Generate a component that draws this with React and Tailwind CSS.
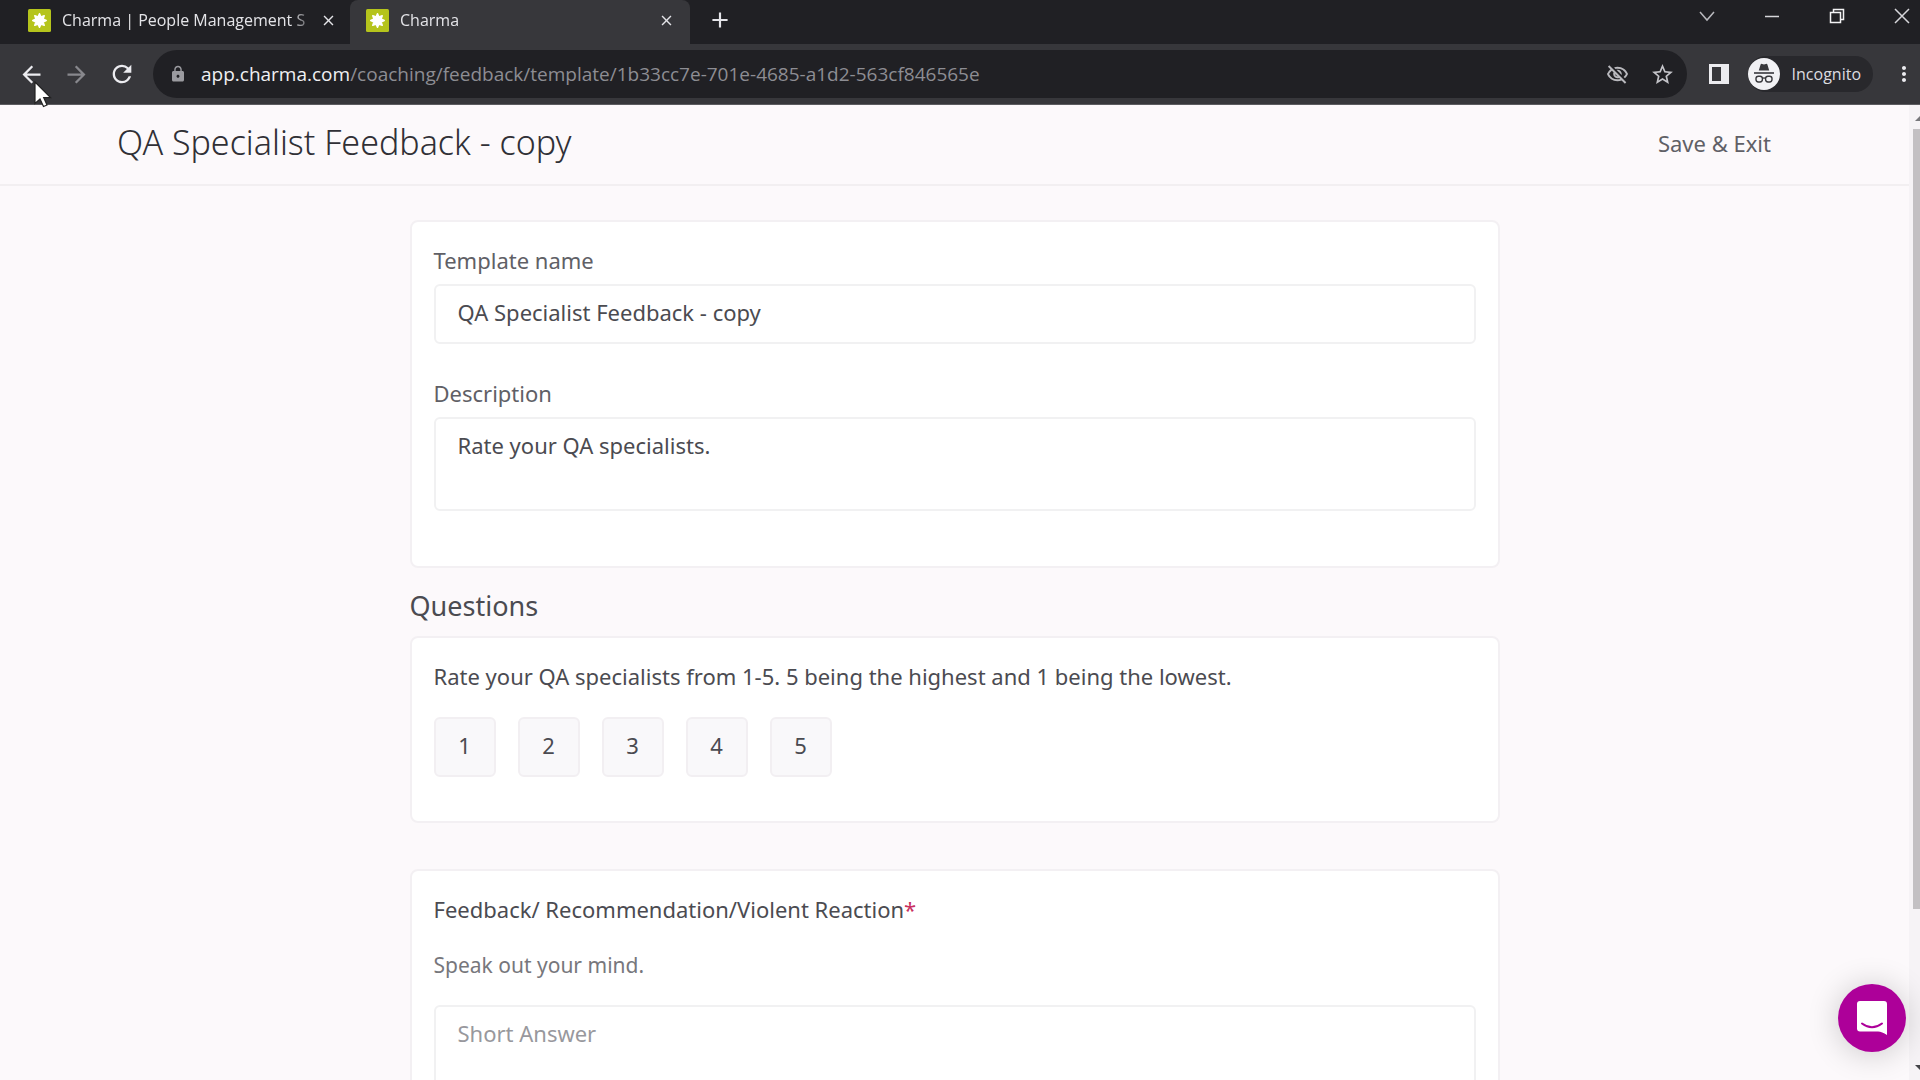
import { useState } from 'react';
import { MdArrowBack, MdArrowForward, MdRefresh, MdLock, MdOutlineVisibilityOff, MdStarBorder, MdMoreVert, MdClose, MdAdd } from 'react-icons/md';

const TABS = [
  { id: 1, title: 'Charma | People Management S', active: false },
  { id: 2, title: 'Charma', active: true },
];

const RATINGS = [1, 2, 3, 4, 5];

function Favicon() {
  return (
    <svg viewBox="0 0 23 23" className="size-[23px] shrink-0">
      <rect width="23" height="23" rx="1.5" fill="#b5c41c" />
      <path
        d="M11.5 4.8 12.9 8 16.2 6.8 15 10.1 18.2 11.5 15 12.9 16.2 16.2 12.9 15 11.5 18.2 10.1 15 6.8 16.2 8 12.9 4.8 11.5 8 10.1 6.8 6.8 10.1 8z"
        fill="#fff"
        stroke="#fff"
        strokeWidth="1.6"
        strokeLinejoin="round"
      />
    </svg>
  );
}

function Incognito() {
  return (
    <svg viewBox="0 0 32 32" className="size-8 shrink-0">
      <circle cx="16" cy="16" r="16" fill="#f1f1f4" />
      <path d="M10.8 12.6 12.6 6.6q.4-1.1 1.5-.7l1.9.6 1.9-.6q1.1-.4 1.5.7l1.8 6z" fill="#38383c" />
      <path d="M6 15h20" stroke="#38383c" strokeWidth="1.6" />
      <rect x="8" y="18.2" width="6.4" height="5.8" rx="2.4" fill="none" stroke="#38383c" strokeWidth="1.4" />
      <rect x="17.6" y="18.2" width="6.4" height="5.8" rx="2.4" fill="none" stroke="#38383c" strokeWidth="1.4" />
      <path d="M14.4 20.4q1.6-1 3.2 0" fill="none" stroke="#38383c" strokeWidth="1.3" />
    </svg>
  );
}

function TabStrip() {
  return (
    <div className="flex h-11 bg-[#202024] text-[#e4e4e8]">
      <div className="flex min-w-0">
        {TABS.map((tab) => (
          <div
            key={tab.id}
            className={
              tab.active
                ? 'flex w-[340px] items-center rounded-t-lg bg-[#37373b] pr-3 pb-1 pl-4'
                : 'flex w-[350px] items-center pr-2.5 pb-1 pl-7'
            }
          >
            <Favicon />
            <span className="ml-[11px] min-w-0 flex-1 overflow-hidden whitespace-nowrap text-base mask-r-from-90% mask-r-to-100%">
              {tab.title}
            </span>
            <button aria-label="Close tab" className="flex size-6 items-center justify-center">
              <MdClose className="size-[17px]" />
            </button>
          </div>
        ))}
      </div>
      <button aria-label="New tab" className="ml-4 flex w-7 items-center justify-center pb-1">
        <MdAdd className="size-[26px]" />
      </button>
      <div className="ml-auto flex items-start gap-[41px] pt-1 pr-1.5">
        <button aria-label="Search tabs">
          <svg viewBox="0 0 24 24" className="size-6" fill="none" stroke="#b9b9be" strokeWidth="1.5">
            <path d="M5 8l7 8 7-8" />
          </svg>
        </button>
        <button aria-label="Minimize">
          <svg viewBox="0 0 24 24" className="size-6" fill="none" stroke="#d6d6da" strokeWidth="1.5">
            <path d="M5 12.5h14" />
          </svg>
        </button>
        <button aria-label="Restore">
          <svg viewBox="0 0 24 24" className="size-6" fill="none" stroke="#f2f2f4" strokeWidth="1.5">
            <path d="M5.5 8.5h10v10h-10zM8.5 8.5V5.5h10v10h-3" />
          </svg>
        </button>
        <button aria-label="Close window">
          <svg viewBox="0 0 24 24" className="size-6" fill="none" stroke="#d6d6da" strokeWidth="1.5">
            <path d="M5 5l14 14M19 5L5 19" />
          </svg>
        </button>
      </div>
    </div>
  );
}

function Toolbar() {
  return (
    <div className="flex h-[61px] items-center border-b border-[#5c5c60] bg-[#37373b] pr-1 pl-[18px] text-[#dcdce0]">
      <button aria-label="Back"><MdArrowBack className="size-[27px] text-[#ececf0]" /></button>
      <button aria-label="Forward" className="ml-[18px]"><MdArrowForward className="size-[27px] text-[#88888d]" /></button>
      <button aria-label="Reload" className="ml-[18px]"><MdRefresh className="size-7 text-[#ececf0]" /></button>
      <div className="ml-[17px] flex h-12 min-w-0 flex-1 items-center rounded-full bg-[#202024] pr-3 pl-4">
        <MdLock className="size-[18px] shrink-0 text-[#9b9ba0]" />
        <div className="ml-3.5 flex-1 truncate text-[19px] text-[#8d8d93]">
          <span className="text-[#f0f0f3]">app.charma.com</span>
          /coaching/feedback/template/1b33cc7e-701e-4685-a1d2-563cf846565e
        </div>
        <button aria-label="Third-party cookies blocked"><MdOutlineVisibilityOff className="size-[23px] text-[#b9b9be]" /></button>
        <button aria-label="Bookmark this tab" className="ml-[21px]"><MdStarBorder className="size-[25px] text-[#c4c4c9]" /></button>
      </div>
      <button aria-label="Side panel" className="ml-[22px]">
        <svg viewBox="0 0 20 20" className="size-5">
          <path d="M0 0h20v20H0zM3 3v14h9V3z" fill="#ececf0" fillRule="evenodd" />
        </svg>
      </button>
      <button className="ml-[19px] flex h-9 items-center rounded-full bg-[#28282c] pr-3">
        <Incognito />
        <span className="ml-3 text-base">Incognito</span>
      </button>
      <button aria-label="Menu" className="ml-[19px]"><MdMoreVert className="size-6 text-[#ececf0]" /></button>
    </div>
  );
}

function Card({ className = '', children }) {
  return (
    <section className={`rounded-lg border-2 border-[#f3f0f3] bg-white px-[22px] ${className}`}>
      {children}
    </section>
  );
}

function Scrollbar() {
  return (
    <div className="flex w-[11px] flex-col overflow-hidden bg-[#f6f3f6] pl-1">
      <svg viewBox="0 0 12 24" className="h-6 w-3 shrink-0">
        <path d="M2 16l5-5 5 5z" fill="#77777b" />
      </svg>
      <div className="h-4/5 bg-[#c3c0c3]" />
      <svg viewBox="0 0 12 24" className="mt-auto h-6 w-3 shrink-0">
        <path d="M2 9l5 5 5-5z" fill="#444448" />
      </svg>
    </div>
  );
}

export default function App() {
  const [name, setName] = useState('QA Specialist Feedback - copy');
  const [description, setDescription] = useState('Rate your QA specialists.');
  const [rating, setRating] = useState(null);
  const [answer, setAnswer] = useState('');

  return (
    <div className="flex h-screen flex-col overflow-hidden bg-[#fcf9fb] font-['Open_Sans',sans-serif] text-[#4b4b51]">
      <TabStrip />
      <Toolbar />

      <div className="flex min-h-0 flex-1 font-['Noto_Sans',sans-serif]">
        <div className="min-w-0 flex-1 overflow-hidden">
          <header className="flex h-[81px] items-start justify-between border-b-2 border-[#f2eff1] pr-[138px] pl-[117px]">
            <h1 className="pt-3.5 text-[34px] leading-[46px] font-light text-[#303036]">{name}</h1>
            <button className="pt-[22px] text-[22px] leading-8 text-[#606066]">Save &amp; Exit</button>
          </header>

          <main className="mx-auto w-[1090px] max-w-full pt-[34px]">
            <Card className="h-[348px] pt-[22px]">
              <label htmlFor="name" className="block text-[22px] leading-8 text-[#606066]">Template name</label>
              <input
                id="name"
                value={name}
                onChange={(e) => setName(e.target.value)}
                className="mt-2 block h-[60px] w-full rounded-md border-2 border-[#f1f1f2] px-[22px] pb-1 text-[22px]"
              />
              <label htmlFor="description" className="mt-[33px] block text-[22px] leading-8 text-[#606066]">Description</label>
              <textarea
                id="description"
                value={description}
                onChange={(e) => setDescription(e.target.value)}
                className="mt-2 block h-[94px] w-full resize-none rounded-md border-2 border-[#f1f1f2] px-[22px] py-2.5 text-[22px] leading-8"
              />
            </Card>

            <h2 className="mt-[18px] text-[27px] leading-10">Questions</h2>

            <Card className="mt-2.5 h-[187px] pt-[22px]">
              <p className="text-[22px] leading-8">Rate your QA specialists from 1-5. 5 being the highest and 1 being the lowest.</p>
              <div className="mt-[25px] flex gap-[22px]">
                {RATINGS.map((n) => (
                  <button
                    key={n}
                    onClick={() => setRating(n)}
                    aria-pressed={rating === n}
                    className="h-[60px] w-[62px] rounded-md border-2 border-[#f2eff2] bg-[#f9f8fa] pb-1 text-[22px]"
                  >
                    {n}
                  </button>
                ))}
              </div>
            </Card>

            <Card className="mt-[46px] pt-[22px] pb-6">
              <label htmlFor="answer" className="block text-[22px] leading-8">
                Feedback/ Recommendation/Violent Reaction<span className="text-[#c9305f]">*</span>
              </label>
              <p className="mt-6 text-[21px] leading-8 text-[#77777c]">Speak out your mind.</p>
              <textarea
                id="answer"
                value={answer}
                onChange={(e) => setAnswer(e.target.value)}
                placeholder="Short Answer"
                className="mt-6 block h-[94px] w-full resize-none rounded-md border-2 border-[#f1f1f2] px-[22px] py-2.5 text-[22px] leading-8 placeholder:text-[#98989d]"
              />
            </Card>
          </main>
        </div>

        <Scrollbar />
      </div>

      <button
        aria-label="Open chat"
        className="fixed right-3.5 bottom-7 flex size-[68px] items-center justify-center rounded-full bg-[#ad0099] shadow-[0_2px_32px_rgba(0,0,0,0.2)]"
      >
        <svg viewBox="0 0 32 36" className="h-9 w-8">
          <path d="M4 1h24q3 0 3 3v31q-5-3.5-9-3.5H4q-3 0-3-3V4q0-3 3-3z" fill="#fff" />
          <path d="M6 23.5q10 7.5 20 0" fill="none" stroke="#ad0099" strokeWidth="2" strokeLinecap="round" />
        </svg>
      </button>

      {/* pointer */}
      <svg viewBox="0 0 18 27" className="pointer-events-none fixed top-[81px] left-[34px] h-[27px] w-[18px]">
        <path d="M1 1v21.5l5-4.5 3.5 7.5 3.5-1.5-3.3-7.3h6.8z" fill="#fff" stroke="#222" strokeWidth="1.2" />
      </svg>
    </div>
  );
}
